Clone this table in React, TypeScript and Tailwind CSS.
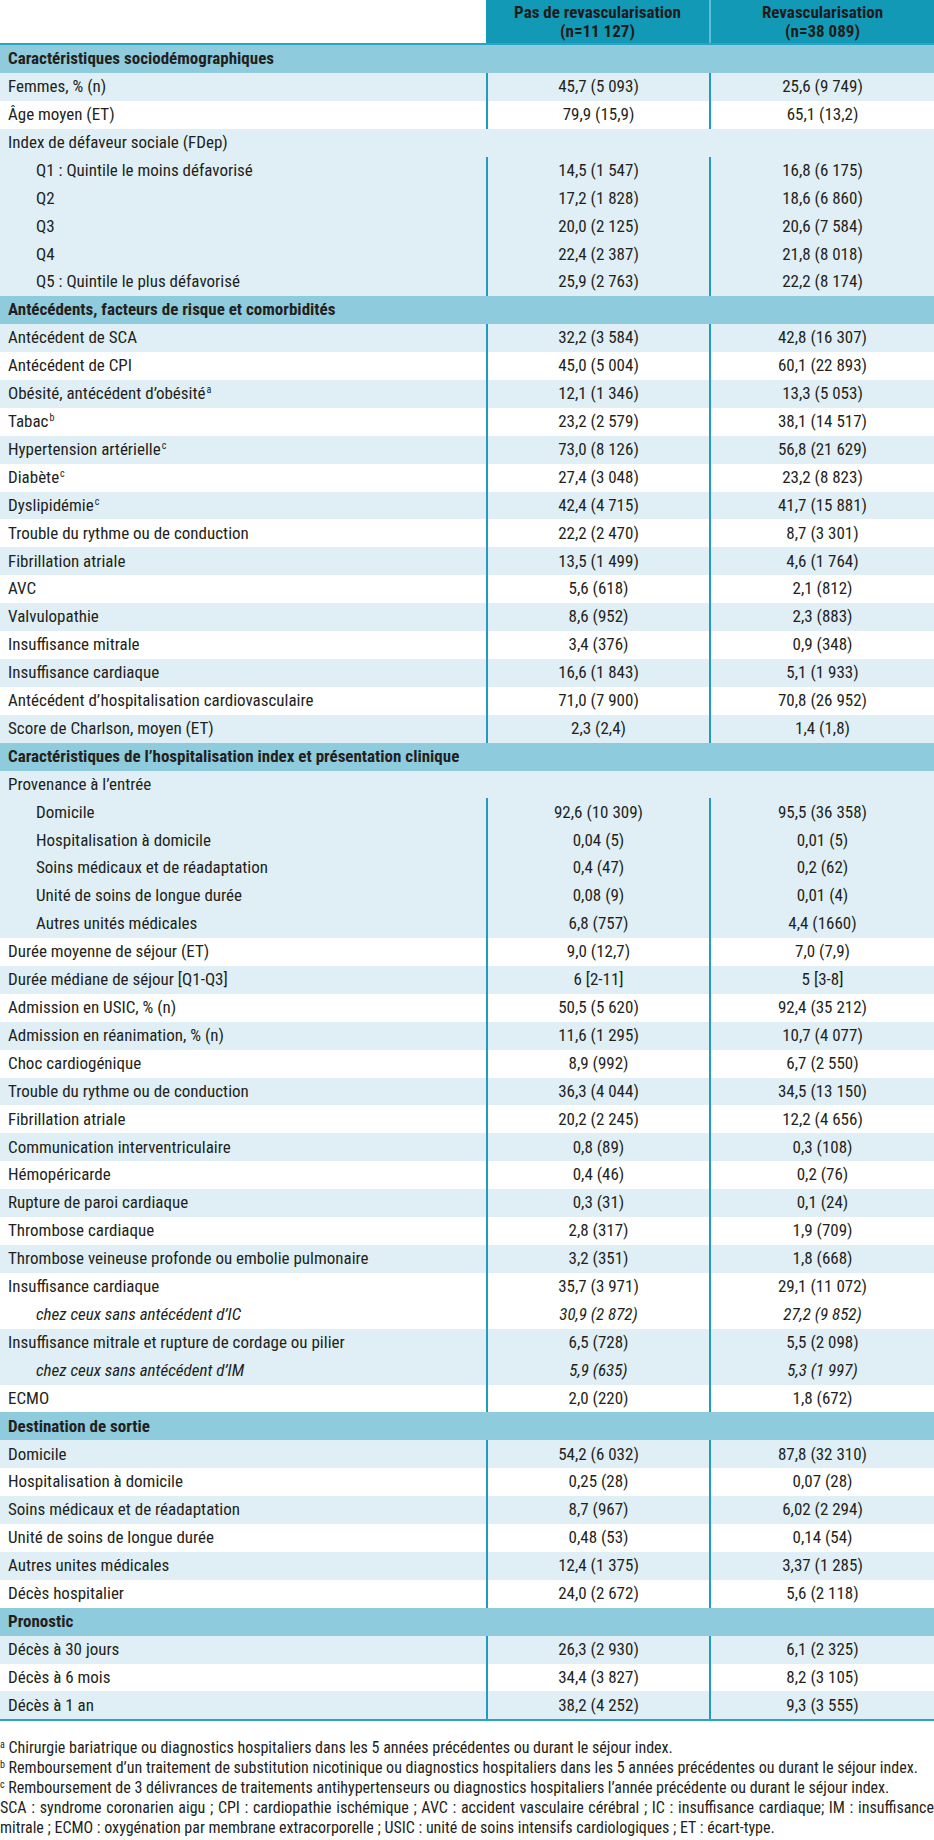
import React from "react";

type Row =
  | { kind: "section"; label: string }
  | {
      kind: "row";
      label: React.ReactNode;
      v1?: string;
      v2?: string;
      light: boolean;
      indent?: boolean;
      italic?: boolean;
    };

const L = true;
const W = false;

const sup = (s: string) => (
  <span className="text-[10px] leading-none relative -top-[6px] ml-px">{s}</span>
);

const fn = (s: string) => (
  <span className="text-[10px] leading-none relative -top-[5px]">{s}</span>
);

const rows: Row[] = [
  { kind: "section", label: "Caractéristiques sociodémographiques" },
  { kind: "row", label: "Femmes, % (n)", v1: "45,7 (5 093)", v2: "25,6 (9 749)", light: L },
  { kind: "row", label: "Âge moyen (ET)", v1: "79,9 (15,9)", v2: "65,1 (13,2)", light: W },
  { kind: "row", label: "Index de défaveur sociale (FDep)", light: L },
  { kind: "row", label: "Q1 : Quintile le moins défavorisé", v1: "14,5 (1 547)", v2: "16,8 (6 175)", light: L, indent: true },
  { kind: "row", label: "Q2", v1: "17,2 (1 828)", v2: "18,6 (6 860)", light: L, indent: true },
  { kind: "row", label: "Q3", v1: "20,0 (2 125)", v2: "20,6 (7 584)", light: L, indent: true },
  { kind: "row", label: "Q4", v1: "22,4 (2 387)", v2: "21,8 (8 018)", light: L, indent: true },
  { kind: "row", label: "Q5 : Quintile le plus défavorisé", v1: "25,9 (2 763)", v2: "22,2 (8 174)", light: L, indent: true },
  { kind: "section", label: "Antécédents, facteurs de risque et comorbidités" },
  { kind: "row", label: "Antécédent de SCA", v1: "32,2 (3 584)", v2: "42,8 (16 307)", light: L },
  { kind: "row", label: "Antécédent de CPI", v1: "45,0 (5 004)", v2: "60,1 (22 893)", light: W },
  { kind: "row", label: <>Obésité, antécédent d’obésité{sup("a")}</>, v1: "12,1 (1 346)", v2: "13,3 (5 053)", light: L },
  { kind: "row", label: <>Tabac{sup("b")}</>, v1: "23,2 (2 579)", v2: "38,1 (14 517)", light: W },
  { kind: "row", label: <>Hypertension artérielle{sup("c")}</>, v1: "73,0 (8 126)", v2: "56,8 (21 629)", light: L },
  { kind: "row", label: <>Diabète{sup("c")}</>, v1: "27,4 (3 048)", v2: "23,2 (8 823)", light: W },
  { kind: "row", label: <>Dyslipidémie{sup("c")}</>, v1: "42,4 (4 715)", v2: "41,7 (15 881)", light: L },
  { kind: "row", label: "Trouble du rythme ou de conduction", v1: "22,2 (2 470)", v2: "8,7 (3 301)", light: W },
  { kind: "row", label: "Fibrillation atriale", v1: "13,5 (1 499)", v2: "4,6 (1 764)", light: L },
  { kind: "row", label: "AVC", v1: "5,6 (618)", v2: "2,1 (812)", light: W },
  { kind: "row", label: "Valvulopathie", v1: "8,6 (952)", v2: "2,3 (883)", light: L },
  { kind: "row", label: "Insuffisance mitrale", v1: "3,4 (376)", v2: "0,9 (348)", light: W },
  { kind: "row", label: "Insuffisance cardiaque", v1: "16,6 (1 843)", v2: "5,1 (1 933)", light: L },
  { kind: "row", label: "Antécédent d’hospitalisation cardiovasculaire", v1: "71,0 (7 900)", v2: "70,8 (26 952)", light: W },
  { kind: "row", label: "Score de Charlson, moyen (ET)", v1: "2,3 (2,4)", v2: "1,4 (1,8)", light: L },
  { kind: "section", label: "Caractéristiques de l’hospitalisation index et présentation clinique" },
  { kind: "row", label: "Provenance à l’entrée", light: L },
  { kind: "row", label: "Domicile", v1: "92,6 (10 309)", v2: "95,5 (36 358)", light: L, indent: true },
  { kind: "row", label: "Hospitalisation à domicile", v1: "0,04 (5)", v2: "0,01 (5)", light: L, indent: true },
  { kind: "row", label: "Soins médicaux et de réadaptation", v1: "0,4 (47)", v2: "0,2 (62)", light: L, indent: true },
  { kind: "row", label: "Unité de soins de longue durée", v1: "0,08 (9)", v2: "0,01 (4)", light: L, indent: true },
  { kind: "row", label: "Autres unités médicales", v1: "6,8 (757)", v2: "4,4 (1660)", light: L, indent: true },
  { kind: "row", label: "Durée moyenne de séjour (ET)", v1: "9,0 (12,7)", v2: "7,0 (7,9)", light: W },
  { kind: "row", label: "Durée médiane de séjour [Q1-Q3]", v1: "6 [2-11]", v2: "5 [3-8]", light: L },
  { kind: "row", label: "Admission en USIC, % (n)", v1: "50,5 (5 620)", v2: "92,4 (35 212)", light: W },
  { kind: "row", label: "Admission en réanimation, % (n)", v1: "11,6 (1 295)", v2: "10,7 (4 077)", light: L },
  { kind: "row", label: "Choc cardiogénique", v1: "8,9 (992)", v2: "6,7 (2 550)", light: W },
  { kind: "row", label: "Trouble du rythme ou de conduction", v1: "36,3 (4 044)", v2: "34,5 (13 150)", light: L },
  { kind: "row", label: "Fibrillation atriale", v1: "20,2 (2 245)", v2: "12,2 (4 656)", light: W },
  { kind: "row", label: "Communication interventriculaire", v1: "0,8 (89)", v2: "0,3 (108)", light: L },
  { kind: "row", label: "Hémopéricarde", v1: "0,4 (46)", v2: "0,2 (76)", light: W },
  { kind: "row", label: "Rupture de paroi cardiaque", v1: "0,3 (31)", v2: "0,1 (24)", light: L },
  { kind: "row", label: "Thrombose cardiaque", v1: "2,8 (317)", v2: "1,9 (709)", light: W },
  { kind: "row", label: "Thrombose veineuse profonde ou embolie pulmonaire", v1: "3,2 (351)", v2: "1,8 (668)", light: L },
  { kind: "row", label: "Insuffisance cardiaque", v1: "35,7 (3 971)", v2: "29,1 (11 072)", light: W },
  { kind: "row", label: "chez ceux sans antécédent d’IC", v1: "30,9 (2 872)", v2: "27,2 (9 852)", light: W, indent: true, italic: true },
  { kind: "row", label: "Insuffisance mitrale et rupture de cordage ou pilier", v1: "6,5 (728)", v2: "5,5 (2 098)", light: L },
  { kind: "row", label: "chez ceux sans antécédent d’IM", v1: "5,9 (635)", v2: "5,3 (1 997)", light: L, indent: true, italic: true },
  { kind: "row", label: "ECMO", v1: "2,0 (220)", v2: "1,8 (672)", light: W },
  { kind: "section", label: "Destination de sortie" },
  { kind: "row", label: "Domicile", v1: "54,2 (6 032)", v2: "87,8 (32 310)", light: L },
  { kind: "row", label: "Hospitalisation à domicile", v1: "0,25 (28)", v2: "0,07 (28)", light: W },
  { kind: "row", label: "Soins médicaux et de réadaptation", v1: "8,7 (967)", v2: "6,02 (2 294)", light: L },
  { kind: "row", label: "Unité de soins de longue durée", v1: "0,48 (53)", v2: "0,14 (54)", light: W },
  { kind: "row", label: "Autres unites médicales", v1: "12,4 (1 375)", v2: "3,37 (1 285)", light: L },
  { kind: "row", label: "Décès hospitalier", v1: "24,0 (2 672)", v2: "5,6 (2 118)", light: W },
  { kind: "section", label: "Pronostic" },
  { kind: "row", label: "Décès à 30 jours", v1: "26,3 (2 930)", v2: "6,1 (2 325)", light: L },
  { kind: "row", label: "Décès à 6 mois", v1: "34,4 (3 827)", v2: "8,2 (3 105)", light: W },
  { kind: "row", label: "Décès à 1 an", v1: "38,2 (4 252)", v2: "9,3 (3 555)", light: L },
];

export default function App() {
  return (
    <div
      className="w-[934px] bg-white text-[#231f20] text-[17px]"
      style={{ fontFamily: '"Liberation Sans Narrow", "Roboto Condensed", "DejaVu Sans Condensed", sans-serif' }}
    >
      {/* Header */}
      <div className="grid grid-cols-[486px_223px_225px] h-[45px] border-b-2 border-[#2aa3c4]">
        <div className="bg-white" />
        <div className="bg-[#1299b6] flex flex-col items-center justify-center font-bold leading-[19px] text-[#1c1c1c]">
          <span>Pas de revascularisation</span>
          <span>(n=11 127)</span>
        </div>
        <div className="bg-[#1299b6] border-l-2 border-[#63bcd3] flex flex-col items-center justify-center font-bold leading-[19px] text-[#1c1c1c]">
          <span>Revascularisation</span>
          <span>(n=38 089)</span>
        </div>
      </div>

      {/* Body */}
      <div className="border-b-2 border-[#2aa3c4]">
        {rows.map((r, i) =>
          r.kind === "section" ? (
            <div key={i} className="h-[27.92px] flex items-center px-2 bg-[#8ecbdc] font-bold">
              {r.label}
            </div>
          ) : (
            <div
              key={i}
              className={
                "grid grid-cols-[486px_223px_225px] h-[27.92px] " +
                (r.light ? "bg-[#dfeff5]" : "bg-white") +
                (r.italic ? " italic" : "")
              }
            >
              <div className={"flex items-center " + (r.indent ? "pl-9" : "pl-2")}>
                <span>{r.label}</span>
              </div>
              {r.v1 !== undefined ? (
                <>
                  <div className="flex items-center justify-center border-l-2 border-[#1f9cc0]">{r.v1}</div>
                  <div className="flex items-center justify-center border-l-2 border-[#1f9cc0]">{r.v2}</div>
                </>
              ) : (
                <>
                  <div />
                  <div />
                </>
              )}
            </div>
          )
        )}
      </div>

      {/* Footnotes */}
      <div className="pt-[17px] text-[16px] leading-[20px]">
        <p>
          {fn("a")} Chirurgie bariatrique ou diagnostics hospitaliers dans les 5 années précédentes ou durant le séjour index.
        </p>
        <p>
          {fn("b")} Remboursement d’un traitement de substitution nicotinique ou diagnostics hospitaliers dans les 5 années précédentes ou durant le séjour index.
        </p>
        <p>
          {fn("c")} Remboursement de 3 délivrances de traitements antihypertenseurs ou diagnostics hospitaliers l’année précédente ou durant le séjour index.
        </p>
        <p className="text-justify">
          SCA : syndrome coronarien aigu ; CPI : cardiopathie ischémique ; AVC : accident vasculaire cérébral ; IC : insuffisance cardiaque; IM : insuffisance mitrale ; ECMO : oxygénation par membrane extracorporelle ; USIC : unité de soins intensifs cardiologiques ; ET : écart-type.
        </p>
      </div>
    </div>
  );
}
